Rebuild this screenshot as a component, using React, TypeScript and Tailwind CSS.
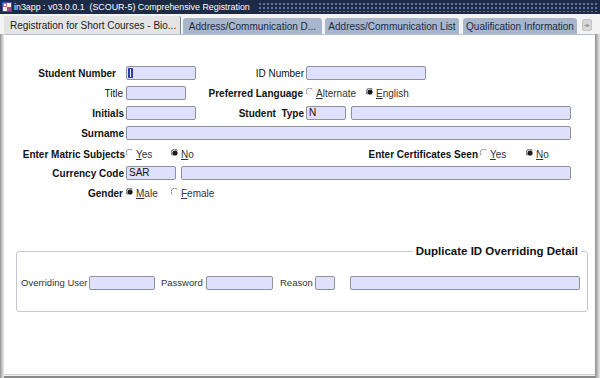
import React from "react";

function Radio({ checked }: { checked?: boolean }) {
  return (
    <svg width="8" height="8" viewBox="0 0 8 8" className="shrink-0 -mt-[2px]">
      <path d="M6.3 1.2 A3.3 3.3 0 0 0 1.2 6.3" stroke="#8a8a8a" strokeWidth="1" fill="none" />
      {checked && <circle cx="4" cy="4" r="2.6" fill="#1a1a1a" />}
      {checked && <path d="M6.3 1.2 A3.3 3.3 0 0 0 1.2 6.3" stroke="#777" strokeWidth="1" fill="none" />}
    </svg>
  );
}

function Opt({ label, u, checked, w }: { label: string; u: number; checked?: boolean; w: string }) {
  return (
    <div className={`flex items-center ${w}`}>
      <Radio checked={checked} />
      <span className="ml-[2px] text-[10px] text-[#333]">
        <span className="underline">{label.slice(0, u)}</span>
        {label.slice(u)}
      </span>
    </div>
  );
}

function Field({ className, value, children }: { className: string; value?: string; children?: React.ReactNode }) {
  return (
    <div
      className={`relative h-[14px] shrink-0 bg-[#dfe0fb] border border-[#8c919d] rounded-[2px] text-[10px] leading-[12px] pl-[2px] text-[#111] ${className}`}
    >
      {value}
      {children}
    </div>
  );
}

function TitleIcon() {
  return (
    <svg width="10" height="10" viewBox="0 0 10 10" className="shrink-0">
      <rect x="0" y="0" width="10" height="10" fill="#3d4fa8" />
      <rect x="1" y="1" width="4" height="4" fill="#e0608a" />
      <rect x="5" y="1" width="4" height="4" fill="#f2f2f2" />
      <rect x="1" y="5" width="4" height="4" fill="#f2f2f2" />
      <rect x="5" y="5" width="4" height="4" fill="#b04090" />
      <rect x="2" y="2" width="2" height="2" fill="#fff" />
    </svg>
  );
}

export default function App() {
  const lbl = "text-[10px] text-[#111] whitespace-pre";
  const bold = "text-[10px] font-bold text-[#111] whitespace-pre";
  return (
    <div className="w-[600px] h-[378px] overflow-hidden flex flex-col bg-[#f4f4f4] font-['Liberation_Sans',Arial,sans-serif]">
      {/* title bar */}
      <div className="h-[14px] shrink-0 flex items-center bg-[#1d2b47] pl-[2px] pr-[3px]">
        <TitleIcon />
        <span className="ml-[2px] text-white text-[8.9px] leading-[14px] whitespace-pre">
          in3app : v03.0.0.1  (SCOUR-5) Comprehensive Registration
        </span>
        <div className="flex-1 ml-[8px] h-[10px] bg-[radial-gradient(circle,#62759a_0.8px,transparent_1.1px)] bg-[length:4px_4px]" />
      </div>

      {/* tab row */}
      <div className="h-[20px] shrink-0 flex items-end pl-[4px] bg-[#f4f4f4]">
        <div className="h-[18px] w-[177px] bg-[#e4e4e4] border-r border-[#7b8494] rounded-t-[2px] flex items-center pl-[6px] text-[10px] text-[#1a1a1a] whitespace-pre">
          Registration for Short Courses - Bio...
        </div>
        <div className="ml-[2px] h-[16px] w-[139px] bg-[#a8b6cb] rounded-t-[3px] flex items-center justify-center text-[10px] text-[#1c2a48] whitespace-pre">
          Address/Communication D...
        </div>
        <div className="ml-[3px] h-[16px] w-[134px] bg-[#a8b6cb] rounded-t-[3px] flex items-center justify-center text-[10px] text-[#1c2a48] whitespace-pre">
          Address/Communication List
        </div>
        <div className="ml-[4px] h-[16px] w-[114px] bg-[#a8b6cb] rounded-t-[3px] flex items-center justify-center text-[10px] text-[#1c2a48] whitespace-pre">
          Qualification Information
        </div>
        <div className="ml-[5px] mb-[3px] h-[12px] w-[10px] bg-[#d8d8d8] border border-[#c4c4c4] rounded-[2px] flex items-center justify-center text-[6px] text-[#999] leading-none">
          ◂▸
        </div>
      </div>

      {/* body */}
      <div className="flex-1 flex min-h-0">
        <div className="w-[4px] shrink-0 bg-gradient-to-r from-[#8e8e8e] via-[#c8c8c8] to-[#e6e6e6]" />
        <div className="flex-1 bg-white border-t border-[#b8c0cc] flex flex-col pt-[31px]">
          {/* row 1 */}
          <div className="flex items-center h-[14px]">
            <div className={`w-[122px] text-right pr-[10px] ${bold}`}>Student Number</div>
            <Field className="w-[70px]">
              <span className="absolute left-[1px] top-[1px] w-[5px] h-[10px] bg-[#2c3fb0] flex items-center justify-center">
                <span className="w-[1px] h-[8px] bg-white" />
              </span>
            </Field>
            <div className={`w-[110px] text-right pr-[2px] ${lbl}`}>ID Number</div>
            <Field className="w-[120px]" />
          </div>
          {/* row 2 */}
          <div className="flex items-center h-[14px] mt-[6px]">
            <div className={`w-[122px] text-right pr-[3px] ${lbl}`}>Title</div>
            <Field className="w-[60px]" />
            <div className={`w-[120px] text-right pr-[3px] ${bold}`}>Preferred Language</div>
            <Opt label="Alternate" u={1} w="w-[60px]" />
            <Opt label="English" u={1} checked w="w-[60px]" />
          </div>
          {/* row 3 */}
          <div className="flex items-center h-[14px] mt-[6px]">
            <div className={`w-[122px] text-right pr-[2px] ${bold}`}>Initials</div>
            <Field className="w-[70px]" />
            <div className={`w-[110px] text-right pr-[2px] ${bold}`}>Student  Type</div>
            <Field className="w-[40px]" value="N" />
            <Field className="ml-[5px] w-[220px]" />
          </div>
          {/* row 4 */}
          <div className="flex items-center h-[14px] mt-[6px]">
            <div className={`w-[122px] text-right pr-[2px] ${bold}`}>Surname</div>
            <Field className="w-[445px]" />
          </div>
          {/* row 5 */}
          <div className="flex items-center h-[14px] mt-[7px]">
            <div className={`w-[122px] text-right pr-[1px] ${bold}`}>Enter Matric Subjects</div>
            <Opt label="Yes" u={1} w="w-[45px]" />
            <Opt label="No" u={1} checked w="w-[45px]" />
            <div className={`w-[264px] text-right pr-[2px] ${bold}`}>Enter Certificates Seen</div>
            <Opt label="Yes" u={1} w="w-[46px]" />
            <Opt label="No" u={1} checked w="w-[46px]" />
          </div>
          {/* row 6 */}
          <div className="flex items-center h-[14px] mt-[5px]">
            <div className={`w-[122px] text-right pr-[2px] ${bold}`}>Currency Code</div>
            <Field className="w-[50px]" value="SAR" />
            <Field className="ml-[5px] w-[390px]" />
          </div>
          {/* row 7 */}
          <div className="flex items-center h-[14px] mt-[6px]">
            <div className={`w-[122px] text-right pr-[3px] ${bold}`}>Gender</div>
            <Opt label="Male" u={1} checked w="w-[45px]" />
            <Opt label="Female" u={1} w="w-[45px]" />
          </div>

          {/* group box */}
          <div className="relative ml-[12px] mt-[51px] w-[572px] h-[61px] border border-[#c3c7cf] rounded-[3px]">
            <div className="absolute right-[6px] -top-[8px] bg-white px-[3px] text-[11.5px] leading-[14px] font-bold text-[#111] whitespace-pre">
              Duplicate ID Overriding Detail
            </div>
            <div className="flex items-center h-[14px] mt-[24px] pl-[4px]">
              <div className="w-[68px] text-[9.5px] text-[#333] whitespace-pre">Overriding User</div>
              <Field className="w-[66px]" />
              <div className="w-[51px] pl-[6px] text-[9.5px] text-[#333] whitespace-pre">Password</div>
              <Field className="w-[67px]" />
              <div className="w-[42px] pl-[7px] text-[9.5px] text-[#333] whitespace-pre">Reason</div>
              <Field className="w-[20px]" />
              <Field className="ml-[15px] w-[230px]" />
            </div>
          </div>
          <div className="flex-1" />
          <div className="h-[4px] shrink-0 border-t border-[#d4d4d4] border-b-2 border-b-[#8a8a8a] bg-[#f0f0f0]" />
        </div>
        <div className="w-[5px] shrink-0 bg-gradient-to-r from-[#8c8c8c] via-[#bdbdbd] to-[#e8e8e8]" />
      </div>
    </div>
  );
}
